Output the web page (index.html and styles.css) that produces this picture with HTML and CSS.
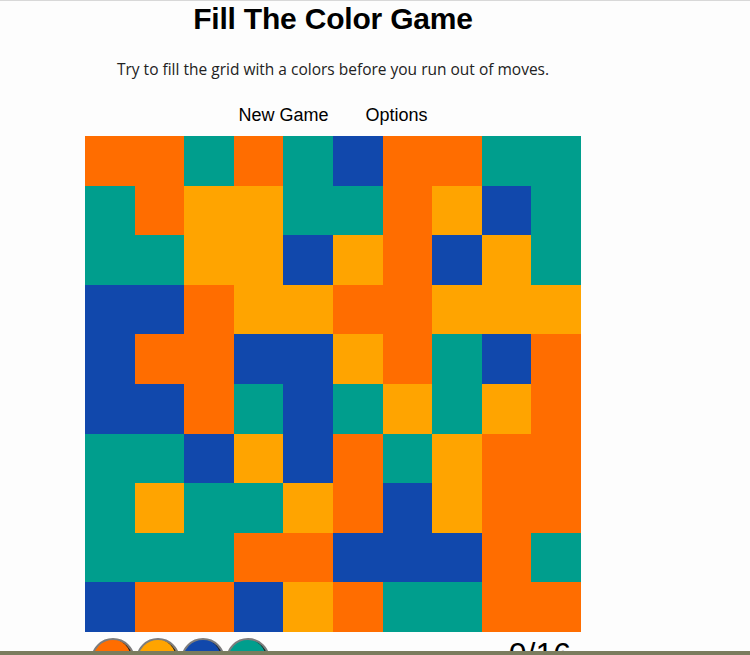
FILE: index.html
```html
<!DOCTYPE html>
<html>
<head>
<meta charset="utf-8">
<link rel="stylesheet" href="styles.css">
</head>
<body>
<div class="topline"></div>
<main class="game">
  <h1 class="title">Fill The Color Game</h1>
  <p class="subtitle">Try to fill the grid with a colors before you run out of moves.</p>
  <nav class="menu">
    <span class="menu-item">New Game</span>
    <span class="menu-item">Options</span>
  </nav>
  <div class="board">
    <div class="c o"></div><div class="c o"></div><div class="c t"></div><div class="c o"></div><div class="c t"></div><div class="c b"></div><div class="c o"></div><div class="c o"></div><div class="c t"></div><div class="c t"></div>
    <div class="c t"></div><div class="c o"></div><div class="c y"></div><div class="c y"></div><div class="c t"></div><div class="c t"></div><div class="c o"></div><div class="c y"></div><div class="c b"></div><div class="c t"></div>
    <div class="c t"></div><div class="c t"></div><div class="c y"></div><div class="c y"></div><div class="c b"></div><div class="c y"></div><div class="c o"></div><div class="c b"></div><div class="c y"></div><div class="c t"></div>
    <div class="c b"></div><div class="c b"></div><div class="c o"></div><div class="c y"></div><div class="c y"></div><div class="c o"></div><div class="c o"></div><div class="c y"></div><div class="c y"></div><div class="c y"></div>
    <div class="c b"></div><div class="c o"></div><div class="c o"></div><div class="c b"></div><div class="c b"></div><div class="c y"></div><div class="c o"></div><div class="c t"></div><div class="c b"></div><div class="c o"></div>
    <div class="c b"></div><div class="c b"></div><div class="c o"></div><div class="c t"></div><div class="c b"></div><div class="c t"></div><div class="c y"></div><div class="c t"></div><div class="c y"></div><div class="c o"></div>
    <div class="c t"></div><div class="c t"></div><div class="c b"></div><div class="c y"></div><div class="c b"></div><div class="c o"></div><div class="c t"></div><div class="c y"></div><div class="c o"></div><div class="c o"></div>
    <div class="c t"></div><div class="c y"></div><div class="c t"></div><div class="c t"></div><div class="c y"></div><div class="c o"></div><div class="c b"></div><div class="c y"></div><div class="c o"></div><div class="c o"></div>
    <div class="c t"></div><div class="c t"></div><div class="c t"></div><div class="c o"></div><div class="c o"></div><div class="c b"></div><div class="c b"></div><div class="c b"></div><div class="c o"></div><div class="c t"></div>
    <div class="c b"></div><div class="c o"></div><div class="c o"></div><div class="c b"></div><div class="c y"></div><div class="c o"></div><div class="c t"></div><div class="c t"></div><div class="c o"></div><div class="c o"></div>
  </div>
  <div class="controls">
    <div class="swatches">
      <span class="swatch o"></span>
      <span class="swatch y"></span>
      <span class="swatch b"></span>
      <span class="swatch t"></span>
    </div>
    <div class="moves">0/16</div>
  </div>
</main>
<div class="bottombar"></div>
</body>
</html>
```
FILE: styles.css
```css
html, body {
  margin: 0;
  padding: 0;
  background: #fdfdfd;
  height: 655px;
  overflow: hidden;
}
.topline {
  height: 1px;
  background: #d8d8d8;
}
.game {
  width: 496px;
  margin-left: 85px;
  display: flex;
  flex-direction: column;
  align-items: center;
}
.title {
  margin: 0;
  font-family: "Liberation Sans", Arial, sans-serif;
  font-weight: bold;
  font-size: 30px;
  line-height: 36px;
  color: #000;
  letter-spacing: -0.2px;
}
.subtitle {
  margin: 20px 0 0;
  font-family: "Open Sans", sans-serif;
  font-size: 15.5px;
  line-height: 24px;
  color: #222;
  white-space: nowrap;
}
.menu {
  margin-top: 22px;
  display: flex;
  gap: 37px;
  font-family: "Liberation Sans", Arial, sans-serif;
  font-size: 18px;
  line-height: 24px;
  color: #000;
}
.board {
  margin-top: 9px;
  width: 496px;
  height: 496px;
  display: grid;
  grid-template-columns: repeat(10, 1fr);
  grid-template-rows: repeat(10, 1fr);
}
.o { background: #ff6d00; }
.t { background: #009e8d; }
.b { background: #1148ac; }
.y { background: #ffa400; }
.controls {
  width: 496px;
  display: flex;
  justify-content: space-between;
  align-items: flex-start;
  margin-top: 6px;
}
.swatches {
  display: flex;
  gap: 1px;
  margin-left: 6px;
}
.swatch {
  width: 40px;
  height: 40px;
  border-radius: 50%;
  border: 2px solid #7d7d7d;
  box-shadow: inset -2px -1px 0 #222;
}
.moves {
  font-family: "Liberation Sans", Arial, sans-serif;
  font-size: 32px;
  line-height: 36px;
  margin-top: -2px;
  margin-right: 10px;
  color: #000;
}
.bottombar {
  position: fixed;
  left: 0;
  right: 0;
  bottom: 0;
  height: 4px;
  background: #7b7c5e;
}
```
